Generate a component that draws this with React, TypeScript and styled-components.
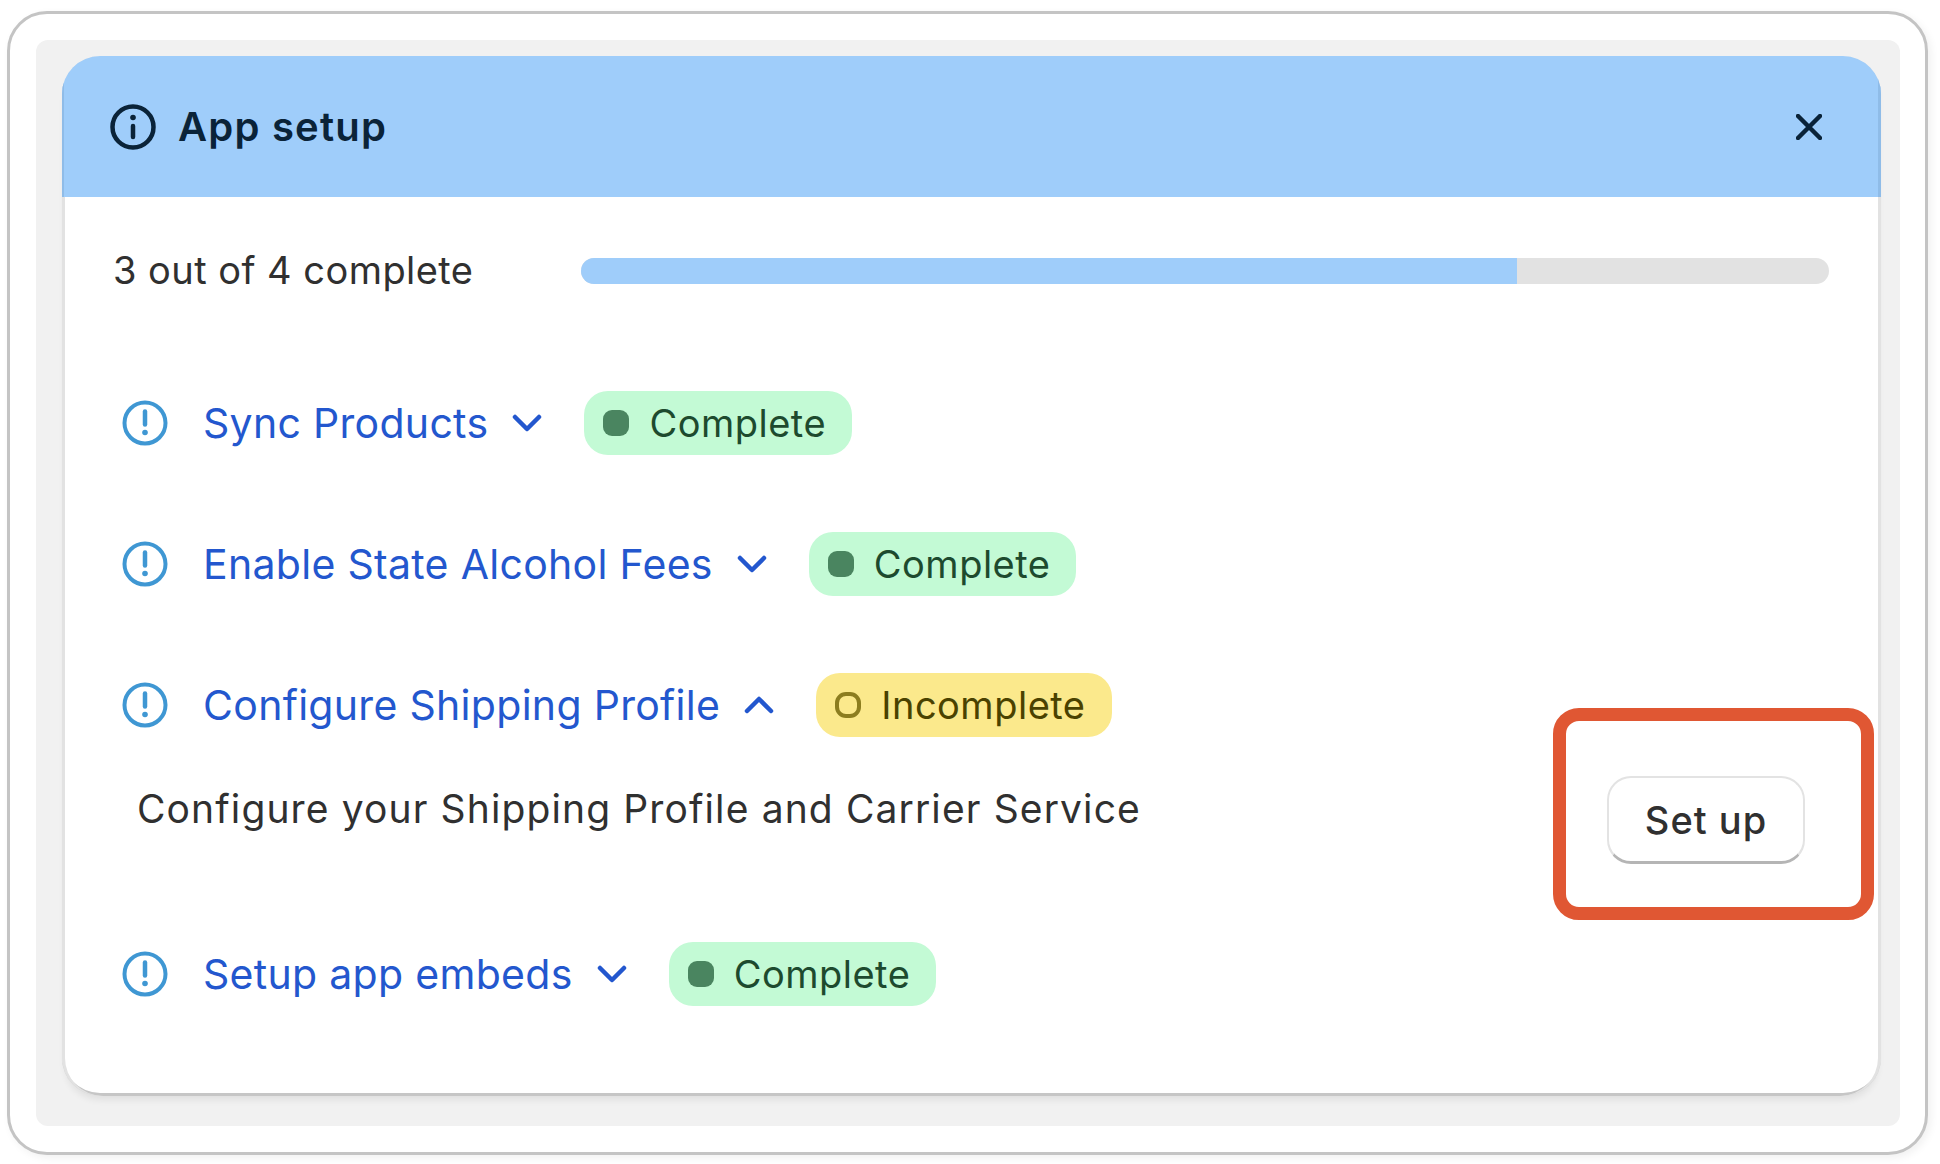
import styled, { createGlobalStyle } from 'styled-components'

const Global = createGlobalStyle`
  html, body { margin: 0; padding: 0; background: #fff; }
  body { font-family: Inter, "Liberation Sans", sans-serif; color: #303030; }
  * { box-sizing: border-box; }
`

const Page = styled.div`
  width: 1940px;
  height: 1164px;
  padding: 11px 12px 9px 7px;
`

const Frame = styled.div`
  height: 100%;
  padding: 26px 25px 26px 26px;
  background: #fff;
  border: 3px solid #c4c4c4;
  border-radius: 40px;
  box-shadow: 3px 3px 8px rgba(0, 0, 0, 0.06);
`

const Backdrop = styled.div`
  height: 100%;
  padding: 16px 19px 30px 26px;
  background: #f1f1f1;
  border-radius: 12px;
`

const Card = styled.div`
  height: 100%;
  background: #fff;
  border-radius: 38px;
  overflow: hidden;
  box-shadow: 0 7px 7px -3px rgba(0, 0, 0, 0.07), inset 3px 0 0 #e2e2e2, inset -3px 0 0 #e2e2e2, inset 0 -3px 0 #c6c6c6;
`

const Header = styled.div`
  height: 141px;
  padding: 0 59px 0 48px;
  display: flex;
  align-items: center;
  justify-content: space-between;
  background: #9fcdfa;
  box-shadow: inset 2px 0 0 #8fbce8, inset -3px 0 0 #8fbce8;
`

const HeaderLeft = styled.div`
  display: flex;
  align-items: center;
  gap: 22px;
`

const Title = styled.h1`
  margin: 0;
  font-size: 40px;
  letter-spacing: 1.2px;
  line-height: 46px;
  font-weight: 600;
  color: #0a2338;
`

const Body = styled.div`
  padding: 51px 52px 0 51px;
`

const ProgressRow = styled.div`
  height: 46px;
  display: flex;
  align-items: center;
  gap: 108px;
`

const ProgressLabel = styled.span`
  margin-top: -2px;
  font-size: 38px;
  letter-spacing: 0.45px;
  line-height: 46px;
  white-space: nowrap;
`

const Track = styled.div`
  flex: 1;
  height: 26px;
  border-radius: 13px;
  background: #e2e2e2;
  overflow: hidden;
`

const Fill = styled.div`
  height: 100%;
  background: #9fcdfa;
`

const List = styled.div`
  margin-top: 97px;
  padding-left: 9px;
  display: flex;
  flex-direction: column;
  gap: 77px;
`

const Step = styled.div`
  display: flex;
  flex-direction: column;
`

const StepRow = styled.div`
  height: 64px;
  display: flex;
  align-items: center;
`

const StepTitle = styled.a`
  margin-left: 35px;
  font-size: 41px;
  letter-spacing: 0.3px;
  line-height: 46px;
  color: #2357ce;
  white-space: nowrap;
`

const Chevron = styled.svg`
  margin-left: 24px;
  flex: none;
`

const Pill = styled.span<{ $done: boolean }>`
  margin-left: 42px;
  height: 64px;
  padding: 0 26px 0 19px;
  display: inline-flex;
  align-items: center;
  gap: 20px;
  border-radius: 24px;
  font-size: 38px;
  letter-spacing: 0.5px;
  white-space: nowrap;
  background: ${p => (p.$done ? '#c3fad5' : '#fbe98c')};
  color: ${p => (p.$done ? '#1d4a2e' : '#4a4200')};
`

const Dot = styled.span<{ $done: boolean }>`
  width: 26px;
  height: 26px;
  border-radius: ${p => (p.$done ? 9 : 11)}px;
  background: ${p => (p.$done ? '#4a8560' : 'transparent')};
  border: ${p => (p.$done ? 'none' : '4px solid #8c7d1f')};
`

const Panel = styled.div`
  margin-top: 39px;
  margin-bottom: 1px;
  padding: 0 24px 0 15px;
  height: 88px;
  display: flex;
  align-items: flex-start;
  justify-content: space-between;
`

const Description = styled.p`
  margin: 10px 0 0;
  font-size: 39px;
  letter-spacing: 1.12px;
  line-height: 46px;
`

const ButtonWrap = styled.div`
  position: relative;
`

const SetupButton = styled.button`
  width: 198px;
  height: 88px;
  background: #fff;
  border: 2px solid #e3e3e3;
  border-bottom: 3px solid #b5b5b5;
  border-radius: 24px;
  font-family: inherit;
  font-size: 38px;
  letter-spacing: 1px;
  font-weight: 500;
  color: #303030;
`

const Highlight = styled.div`
  position: absolute;
  left: -54px;
  right: -69px;
  top: -68px;
  bottom: -56px;
  border: 13px solid #e05733;
  border-radius: 26px;
  pointer-events: none;
`

const InfoIcon = () => (
  <svg width="46" height="46" viewBox="0 0 46 46" fill="none" stroke="#0a2338" strokeWidth="4.5" strokeLinecap="round">
    <circle cx="23" cy="23" r="20.5" />
    <path d="M23 22v11" strokeWidth="4.5" />
    <circle cx="23" cy="13.5" r="2.8" fill="#0a2338" stroke="none" />
  </svg>
)

const AlertIcon = () => (
  <svg width="46" height="46" viewBox="0 0 46 46" fill="none" stroke="#3f97d3" strokeWidth="4" strokeLinecap="round">
    <circle cx="23" cy="23" r="20.5" />
    <path d="M23 11.5v13" strokeWidth="4.5" />
    <circle cx="23" cy="32.5" r="2.8" fill="#3f97d3" stroke="none" />
  </svg>
)

const CloseIcon = () => (
  <svg width="26" height="26" viewBox="0 0 26 26" fill="none" stroke="#0a2338" strokeWidth="4.5" strokeLinecap="round">
    <path d="M2 2l22 22M24 2L2 24" />
  </svg>
)

const ChevronIcon = ({ up }: { up?: boolean }) => (
  <Chevron width="30" height="20" viewBox="0 0 30 20" fill="none" stroke="#2357ce" strokeWidth="4.5" strokeLinecap="round" strokeLinejoin="round">
    <path d={up ? 'M3 16L15 4l12 12' : 'M3 4l12 12L27 4'} />
  </Chevron>
)

const steps = [
  { title: 'Sync Products', done: true },
  { title: 'Enable State Alcohol Fees', done: true },
  { title: 'Configure Shipping Profile', done: false },
  { title: 'Setup app embeds', done: true },
]

function App() {
  return (
    <Page>
      <Global />
      <Frame>
        <Backdrop>
          <Card>
            <Header>
              <HeaderLeft>
                <InfoIcon />
                <Title>App setup</Title>
              </HeaderLeft>
              <CloseIcon />
            </Header>
            <Body>
              <ProgressRow>
                <ProgressLabel>3 out of 4 complete</ProgressLabel>
                <Track>
                  <Fill style={{ width: '75%' }} />
                </Track>
              </ProgressRow>
              <List>
                {steps.map(step => (
                  <Step key={step.title}>
                    <StepRow>
                      <AlertIcon />
                      <StepTitle>{step.title}</StepTitle>
                      <ChevronIcon up={!step.done} />
                      <Pill $done={step.done}>
                        <Dot $done={step.done} />
                        {step.done ? 'Complete' : 'Incomplete'}
                      </Pill>
                    </StepRow>
                    {!step.done && (
                      <Panel>
                        <Description>Configure your Shipping Profile and Carrier Service</Description>
                        <ButtonWrap>
                          <SetupButton>Set up</SetupButton>
                          <Highlight />
                        </ButtonWrap>
                      </Panel>
                    )}
                  </Step>
                ))}
              </List>
            </Body>
          </Card>
        </Backdrop>
      </Frame>
    </Page>
  )
}

export default App
